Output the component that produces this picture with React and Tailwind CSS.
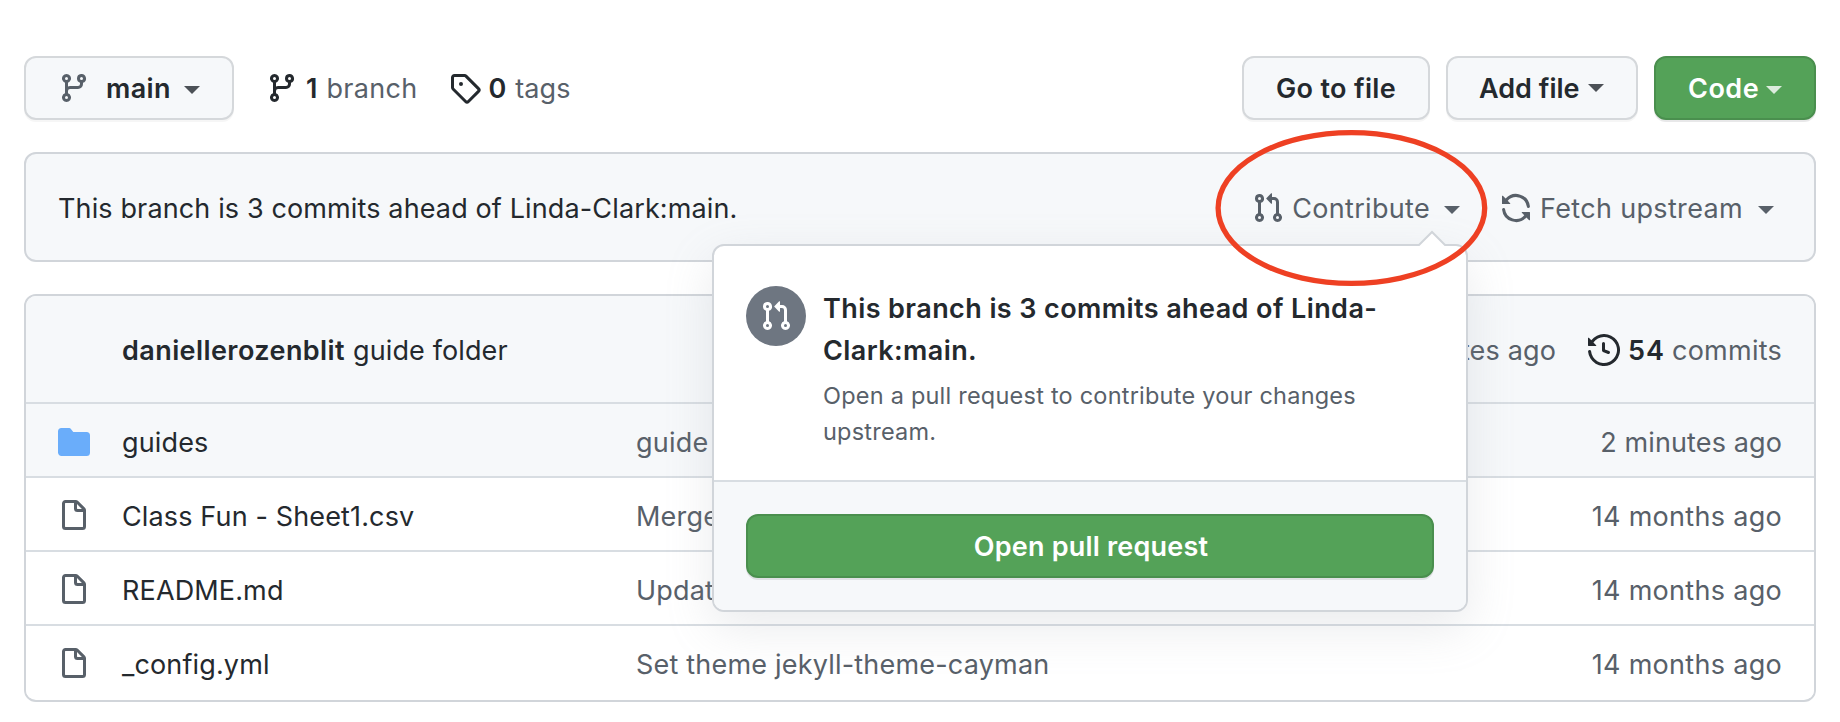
import React from "react";

const PATHS = {
  branch:
    "M11.75 2.5a.75.75 0 100 1.5.75.75 0 000-1.5zm-2.25.75a2.25 2.25 0 113 2.122V6A2.5 2.5 0 0110 8.5H6a1 1 0 00-1 1v1.128a2.251 2.251 0 11-1.5 0V5.372a2.25 2.25 0 111.5 0v1.836A2.492 2.492 0 016 7h4a1 1 0 001-1v-.628A2.25 2.25 0 019.5 3.25zM4.25 12a.75.75 0 100 1.5.75.75 0 000-1.5zM3.5 3.25a.75.75 0 111.5 0 .75.75 0 01-1.5 0z",
  pullRequest:
    "M7.177 3.073L9.573.677A.25.25 0 0110 .854v4.792a.25.25 0 01-.427.177L7.177 3.427a.25.25 0 010-.354zM3.75 2.5a.75.75 0 100 1.5.75.75 0 000-1.5zm-2.25.75a2.25 2.25 0 113 2.122v5.256a2.251 2.251 0 11-1.5 0V5.372A2.25 2.25 0 011.5 3.25zM11 2.5h-1V4h1a1 1 0 011 1v5.628a2.251 2.251 0 101.5 0V5A2.5 2.5 0 0011 2.5zm1 10.25a.75.75 0 111.5 0 .75.75 0 01-1.5 0zM3.75 12a.75.75 0 100 1.5.75.75 0 000-1.5z",
  tag: "M2.5 7.775V2.75a.25.25 0 01.25-.25h5.025a.25.25 0 01.177.073l6.25 6.25a.25.25 0 010 .354l-5.025 5.025a.25.25 0 01-.354 0l-6.25-6.25a.25.25 0 01-.073-.177zm-1.5 0V2.75C1 1.784 1.784 1 2.75 1h5.025c.464 0 .91.184 1.238.513l6.25 6.25a1.75 1.75 0 010 2.474l-5.026 5.026a1.75 1.75 0 01-2.474 0l-6.25-6.25A1.75 1.75 0 011 7.775zM6 5a1 1 0 100 2 1 1 0 000-2z",
  sync: "M8 2.5a5.487 5.487 0 00-4.131 1.869l1.204 1.204A.25.25 0 014.896 6H1.25A.25.25 0 011 5.75V2.104a.25.25 0 01.427-.177l1.38 1.38A7.001 7.001 0 0114.95 7.16a.75.75 0 11-1.49.178A5.501 5.501 0 008 2.5zM1.705 8.005a.75.75 0 01.834.656 5.501 5.501 0 009.592 2.97l-1.204-1.204a.25.25 0 01.177-.427h3.646a.25.25 0 01.25.25v3.646a.25.25 0 01-.427.177l-1.38-1.38A7.001 7.001 0 011.05 8.84a.75.75 0 01.656-.834z",
  history:
    "M1.643 3.143L.427 1.927A.25.25 0 000 2.104V5.75c0 .138.112.25.25.25h3.646a.25.25 0 00.177-.427L2.715 4.215a6.5 6.5 0 11-1.18 4.458.75.75 0 10-1.493.154 8.001 8.001 0 101.6-5.684zM7.75 4a.75.75 0 01.75.75v2.992l2.028.812a.75.75 0 01-.557 1.392l-2.5-1A.75.75 0 017 8.25v-3.5A.75.75 0 017.75 4z",
  file: "M3.75 1.5a.25.25 0 00-.25.25v11.5c0 .138.112.25.25.25h8.5a.25.25 0 00.25-.25V6H9.75A1.75 1.75 0 018 4.25V1.5H3.75zm5.75.56v2.19c0 .138.112.25.25.25h2.19L9.5 2.06zM2 1.75C2 .784 2.784 0 3.75 0h5.086c.464 0 .909.184 1.237.513l3.414 3.414c.329.328.513.773.513 1.237v8.086A1.75 1.75 0 0112.25 15h-8.5A1.75 1.75 0 012 13.25V1.75z",
  folder:
    "M1.75 1A1.75 1.75 0 000 2.75v10.5C0 14.216.784 15 1.75 15h12.5A1.75 1.75 0 0016 13.25v-8.5A1.75 1.75 0 0014.25 3h-6.5a.25.25 0 01-.2-.1l-.9-1.2c-.33-.44-.85-.7-1.4-.7h-3.5z",
};

function Icon({ name, className = "" }) {
  return (
    <svg viewBox="0 0 16 16" className={`size-8 shrink-0 ${className}`} fill="currentColor" fillRule="evenodd">
      <path d={PATHS[name]} />
    </svg>
  );
}

function Caret({ className = "" }) {
  return (
    <svg viewBox="0 0 16 8" className={`h-2 w-4 shrink-0 ${className}`} fill="currentColor">
      <path d="M0 0h16L8 8z" />
    </svg>
  );
}

const BUTTON =
  "flex h-16 items-center rounded-xl border-2 border-[#d5d8db] bg-[#f6f8fa] font-semibold shadow-[0_2px_0_rgba(27,31,35,0.04)]";
const GREEN_BUTTON =
  "flex h-16 items-center rounded-xl border-2 border-[#4a8f4e] bg-[#54a258] font-semibold text-white shadow-[0_2px_0_rgba(27,31,35,0.1)]";

function Toolbar() {
  return (
    <div className="flex items-center">
      <button className={`${BUTTON} w-[210px] pl-8`}>
        <Icon name="branch" className="text-[#586069]" />
        <span className="ml-4 pt-0.5 tracking-[0.4px]">main</span>
        <Caret className="mt-1 ml-[13px] text-[#4c5157]" />
      </button>
      <a className="ml-8 flex items-center">
        <Icon name="branch" />
        <span className="ml-2 pt-0.5 font-semibold">1</span>
        <span className="ml-[9px] pt-0.5 tracking-[0.3px] text-[#586069]">branch</span>
      </a>
      <a className="ml-8 flex items-center">
        <Icon name="tag" />
        <span className="ml-[7px] pt-0.5 font-semibold">0</span>
        <span className="ml-[9px] pt-0.5 tracking-[0.1px] text-[#586069]">tags</span>
      </a>
      <div className="ml-auto flex gap-4">
        <button className={`${BUTTON} w-[188px] pl-8 tracking-[0.33px]`}>
          <span className="pt-0.5">Go to file</span>
        </button>
        <button className={`${BUTTON} w-48 pl-[31px]`}>
          <span className="pt-0.5">Add file</span>
          <Caret className="ml-2 text-[#4c5157]" />
        </button>
        <button className={`${GREEN_BUTTON} w-[162px] pl-8 tracking-[0.5px]`}>
          <span className="pt-0.5">Code</span>
          <Caret className="mt-1 ml-[7px] text-[#dcebdd]" />
        </button>
      </div>
    </div>
  );
}

function BranchStatus() {
  return (
    <div className="mt-8 flex h-[110px] items-center rounded-xl border-2 border-[#d1d5da] bg-[#f6f8fa] pt-0.5 pr-10 pl-8">
      <span className="pt-0.5 tracking-[0.13px]">This branch is 3 commits ahead of Linda-Clark:main.</span>
      <div className="ml-auto flex items-center text-[#586069]">
        <Icon name="pullRequest" />
        <span className="ml-2 pt-0.5 tracking-[0.3px]">Contribute</span>
        <Caret className="mt-1 ml-[14px]" />
      </div>
      <div className="ml-10 flex items-center text-[#586069]">
        <Icon name="sync" />
        <span className="ml-2 pt-0.5 tracking-[0.34px]">Fetch upstream</span>
        <Caret className="mt-1 ml-[15px]" />
      </div>
    </div>
  );
}

const FILES = [
  { icon: "folder", name: "guides", message: "guide folder", age: "2 minutes ago" },
  { icon: "file", name: "Class Fun - Sheet1.csv", message: "Merge branch 'main'", age: "14 months ago" },
  { icon: "file", name: "README.md", message: "Update README.md", age: "14 months ago" },
  { icon: "file", name: "_config.yml", message: "Set theme jekyll-theme-cayman", age: "14 months ago" },
];

function FileTable() {
  return (
    <div className="mt-8 h-[408px] overflow-hidden rounded-xl border-2 border-[#d1d5da]">
      <div className="flex h-[106px] items-center bg-[#f6f8fa] pt-0.5 pr-8 pl-24">
        <span className="pt-0.5 font-semibold tracking-[0.42px]">daniellerozenblit</span>
        <span className="ml-2 pt-0.5 tracking-[0.12px]">guide folder</span>
        <span className="ml-auto pt-0.5 tracking-[0.15px] text-[#586069]">2 minutes ago</span>
        <Icon name="history" className="ml-8" />
        <span className="ml-2 pt-0.5 font-semibold tracking-[1px]">54</span>
        <span className="ml-[7px] pt-0.5 tracking-[0.25px] text-[#586069]">commits</span>
      </div>
      {FILES.map((f) => (
        <div
          key={f.name}
          className={`grid h-[74px] grid-cols-[96px_514px_1fr] items-center border-t-2 border-[#d8dde2] pt-1 ${
            f.icon === "folder" ? "bg-[#f6f8fa]" : "bg-white"
          }`}
        >
          <Icon name={f.icon} className={f.icon === "folder" ? "ml-8 text-[#6aadfa]" : "ml-8 text-[#586069]"} />
          <span className="pt-0.5 tracking-[0.14px]">{f.name}</span>
          <div className="flex justify-between pt-0.5 pr-8 text-[#586069]">
            <span className="tracking-[0.2px]">{f.message}</span>
            <span className={f.icon === "folder" ? "tracking-[0.12px]" : "tracking-[0.3px]"}>{f.age}</span>
          </div>
        </div>
      ))}
    </div>
  );
}

function ContributePopover() {
  return (
    <div className="absolute top-[244px] left-[712px] w-[756px] rounded-xl border-2 border-[#d1d5da] bg-white whitespace-normal shadow-[0_16px_48px_rgba(149,157,165,0.2)]">
      <svg viewBox="0 0 32 16" className="absolute -top-4 left-[702px] h-4 w-8">
        <path d="M1 17L16 2l15 15z" fill="#fff" />
        <path d="M1.5 16.5L16 2l14.500 14.500" fill="none" stroke="#d1d5da" strokeWidth="2" />
      </svg>
      <div className="flex h-[234px] pt-10 pl-8">
        <div className="flex size-[60px] shrink-0 items-center justify-center rounded-full bg-[#6e7681] text-white">
          <Icon name="pullRequest" />
        </div>
        <div className="ml-[17px] pt-0.5">
          <div className="w-[570px] leading-[42px] font-semibold tracking-[0.41px]">
            This branch is 3 commits ahead of Linda-Clark:main.
          </div>
          <div className="mt-1.5 w-[560px] text-[23.5px] leading-9 tracking-[0.22px] text-[#586069]">
            Open a pull request to contribute your changes upstream.
          </div>
        </div>
      </div>
      <div className="rounded-b-[10px] border-t-2 border-[#d8dde2] bg-[#f6f8fa] p-8">
        <button className={`${GREEN_BUTTON} w-full justify-center tracking-[0.2px]`}>
          <span className="pt-0.5 pl-0.5">Open pull request</span>
        </button>
      </div>
    </div>
  );
}

export default function App() {
  return (
    <div className="relative h-[722px] w-[1840px] overflow-hidden bg-white px-6 pt-14 font-[Inter,sans-serif] text-[27px] leading-8 whitespace-nowrap text-[#24292e]">
      <Toolbar />
      <BranchStatus />
      <FileTable />
      <ContributePopover />
      <svg viewBox="0 0 276 160" className="pointer-events-none absolute top-32 left-[1213px] h-40 w-[276px]">
        <ellipse cx="138.400" cy="80" rx="133.300" ry="75.400" fill="none" stroke="#ee4023" strokeWidth="5.300" />
      </svg>
    </div>
  );
}
